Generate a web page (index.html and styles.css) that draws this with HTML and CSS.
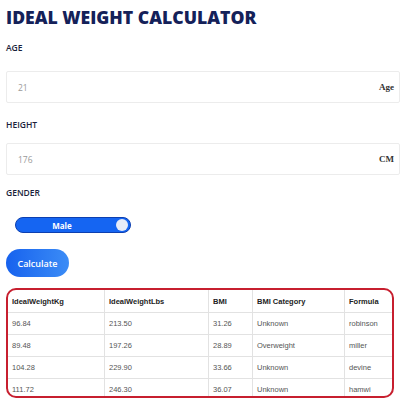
FILE: index.html
```html
<!DOCTYPE html>
<html>
<head>
<meta charset="utf-8">
<link rel="stylesheet" href="styles.css">
</head>
<body>
<div class="page">
  <h1 class="title">IDEAL WEIGHT CALCULATOR</h1>
  <div class="label label-age">AGE</div>
  <div class="field">
    <span class="value">21</span>
    <span class="unit">Age</span>
  </div>
  <div class="label label-height">HEIGHT</div>
  <div class="field">
    <span class="value">176</span>
    <span class="unit">CM</span>
  </div>
  <div class="label label-gender">GENDER</div>
  <div class="toggle">
    <span class="toggle-text">Male</span>
    <span class="knob"></span>
  </div>
  <button class="calc">Calculate</button>
  <div class="results">
    <table class="table">
      <thead>
        <tr><th class="c1">IdealWeightKg</th><th class="c2">IdealWeightLbs</th><th class="c3">BMI</th><th class="c4">BMI Category</th><th class="c5">Formula</th></tr>
      </thead>
      <tbody>
        <tr><td>96.84</td><td>213.50</td><td>31.26</td><td>Unknown</td><td>robinson</td></tr>
        <tr><td>89.48</td><td>197.26</td><td>28.89</td><td>Overweight</td><td>miller</td></tr>
        <tr><td>104.28</td><td>229.90</td><td>33.66</td><td>Unknown</td><td>devine</td></tr>
        <tr><td>111.72</td><td>246.30</td><td>36.07</td><td>Unknown</td><td>hamwi</td></tr>
      </tbody>
    </table>
  </div>
</div>
</body>
</html>
```
FILE: styles.css
```css
html, body { margin: 0; padding: 0; background: #fff; }
body { font-family: "Open Sans", "Liberation Sans", sans-serif; }
.page { padding: 6px 0 0 6px; width: 394px; }
.title {
  margin: 0;
  font-size: 17.6px;
  line-height: 22px;
  font-weight: 800;
  color: #142159;
}
.label {
  font-size: 8.5px;
  font-weight: 600;
  color: #1b1f3b;
  line-height: 12px;
}
.label-age { margin-top: 14px; margin-bottom: 17px; }
.label-height { margin-top: 16px; margin-bottom: 12px; }
.label-gender { margin-top: 12px; margin-bottom: 18px; }
.field {
  box-sizing: border-box;
  height: 32px;
  border: 1px solid #ececec;
  border-radius: 2px;
  display: flex;
  align-items: center;
  justify-content: space-between;
  padding: 0 5px 0 11px;
}
.value { font-size: 8.5px; color: #9a9a9a; }
.unit { font-family: "Liberation Serif", serif; font-weight: 700; font-size: 9px; color: #333; }
.toggle {
  margin-left: 9px;
  width: 116px;
  height: 16px;
  box-sizing: border-box;
  border-radius: 8px;
  background: #1565f2;
  border: 1px solid #0d3fb0;
  display: flex;
  align-items: center;
}
.toggle-text {
  flex: 1;
  text-align: center;
  color: #fff;
  font-weight: 700;
  font-size: 8px;
  padding-right: 8px;
}
.knob {
  width: 12px;
  height: 12px;
  border-radius: 50%;
  background: #e8ecf8;
  margin-right: 2px;
}
.calc {
  display: block;
  margin-top: 16px;
  width: 63px;
  height: 28px;
  border: none;
  border-radius: 14px;
  background: linear-gradient(90deg, #1762ee, #3b8cf6);
  color: #fff;
  font-family: "Open Sans", sans-serif;
  font-size: 9px;
  font-weight: 600;
  padding: 0;
}
.results {
  margin-top: 11px;
  width: 388px;
  height: 110px;
  box-sizing: border-box;
  border: 2px solid #c71f2f;
  border-radius: 10px;
  overflow: hidden;
}
.table {
  border-collapse: collapse;
  width: 100%;
  font-family: "Liberation Sans", Arial, sans-serif;
  font-size: 7.5px;
  color: #555;
}
.table th, .table td {
  border: 1px solid #e2e2e2;
  text-align: left;
  padding: 0 4px;
  height: 21px;
}
.table th { color: #222; font-weight: 700; height: 22px; }
.table tr:first-child th { border-top: none; }
.table tr th:first-child, .table tr td:first-child { border-left: none; }
.table tr th:last-child, .table tr td:last-child { border-right: none; }
.table tbody tr:last-child td { border-bottom: none; }
.c1 { width: 88px; }
.c2 { width: 95px; }
.c3 { width: 35px; }
.c4 { width: 83px; }
```
